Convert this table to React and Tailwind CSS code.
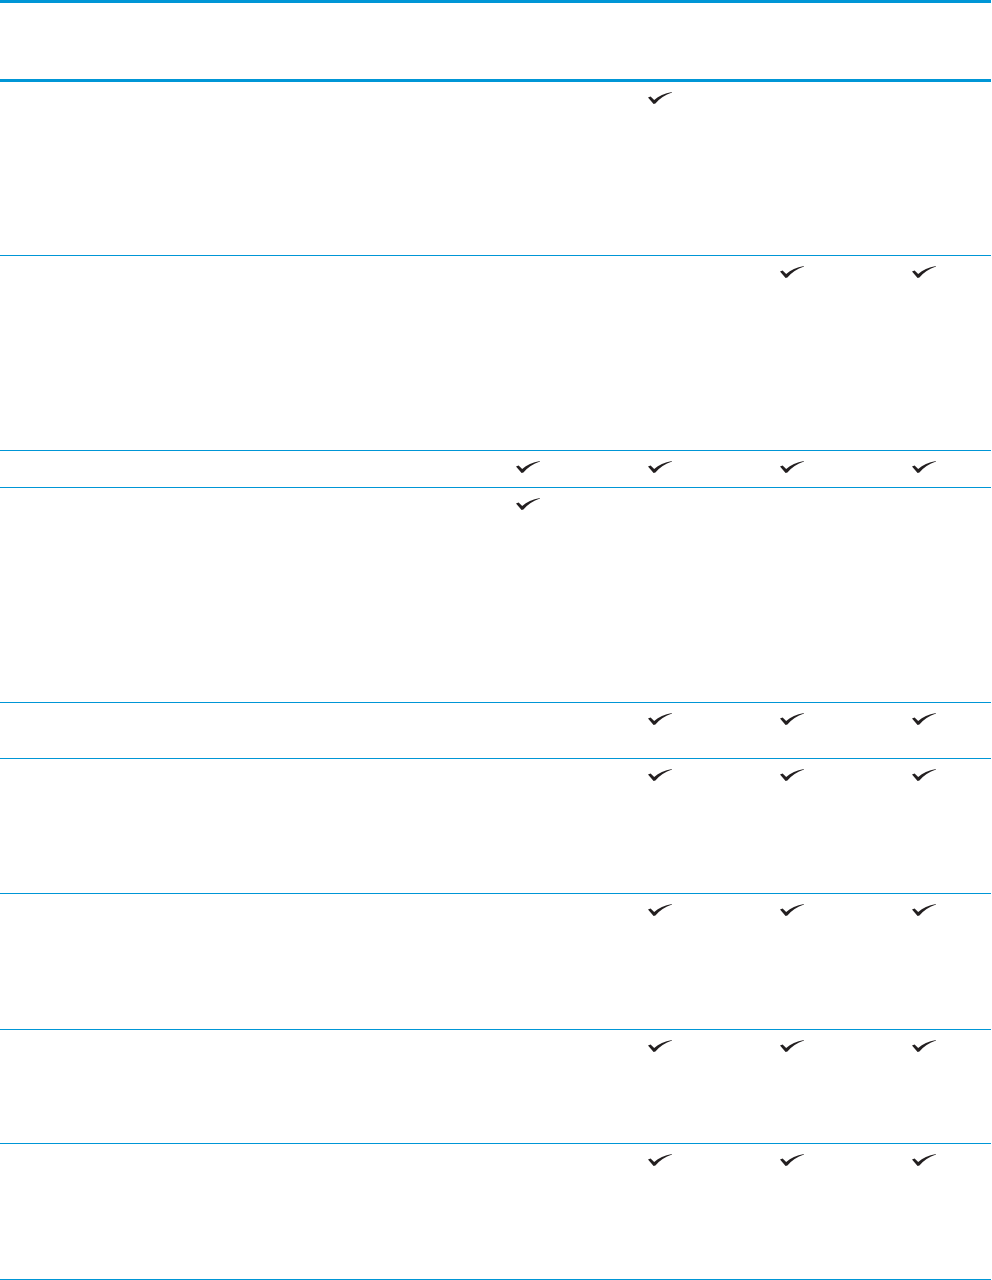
const rows = [
  { h: 'h-[174px]', checks: [false, true, false, false] },
  { h: 'h-[195px]', checks: [false, false, true, true] },
  { h: 'h-[37px]', checks: [true, true, true, true] },
  { h: 'h-[215px]', checks: [true, false, false, false] },
  { h: 'h-[56px]', checks: [false, true, true, true] },
  { h: 'h-[135px]', checks: [false, true, true, true] },
  { h: 'h-[136px]', checks: [false, true, true, true] },
  { h: 'h-[114px]', checks: [false, true, true, true] },
  { h: 'h-[136px]', checks: [false, true, true, true] },
]

const Check = () => (
  <svg width="24" height="12" viewBox="0 0 24 12" className="block">
    <path
      d="M0 5.4 L2.6 4.4 L6.2 7.9 C10.6 4.2 16.5 1.3 24 0 L24 0.6 C17 3 11.6 6.8 7.4 11.5 L5.6 12 Z"
      fill="#231f20"
    />
  </svg>
)

const App = () => {
  return (
    <div className="w-[991px] bg-white font-['Liberation_Sans',sans-serif]">
      <div className="h-[82px] border-y-[3px] border-[#0096d6]" />
      {rows.map((row, i) => (
        <div key={i} className={`flex border-b border-[#0096d6] ${row.h}`}>
          <div className="w-[462px]" />
          {row.checks.map((c, j) => (
            <div key={j} className="flex w-[132px] justify-center pt-[10px]">
              {c && <Check />}
            </div>
          ))}
        </div>
      ))}
    </div>
  )
}

export default App
